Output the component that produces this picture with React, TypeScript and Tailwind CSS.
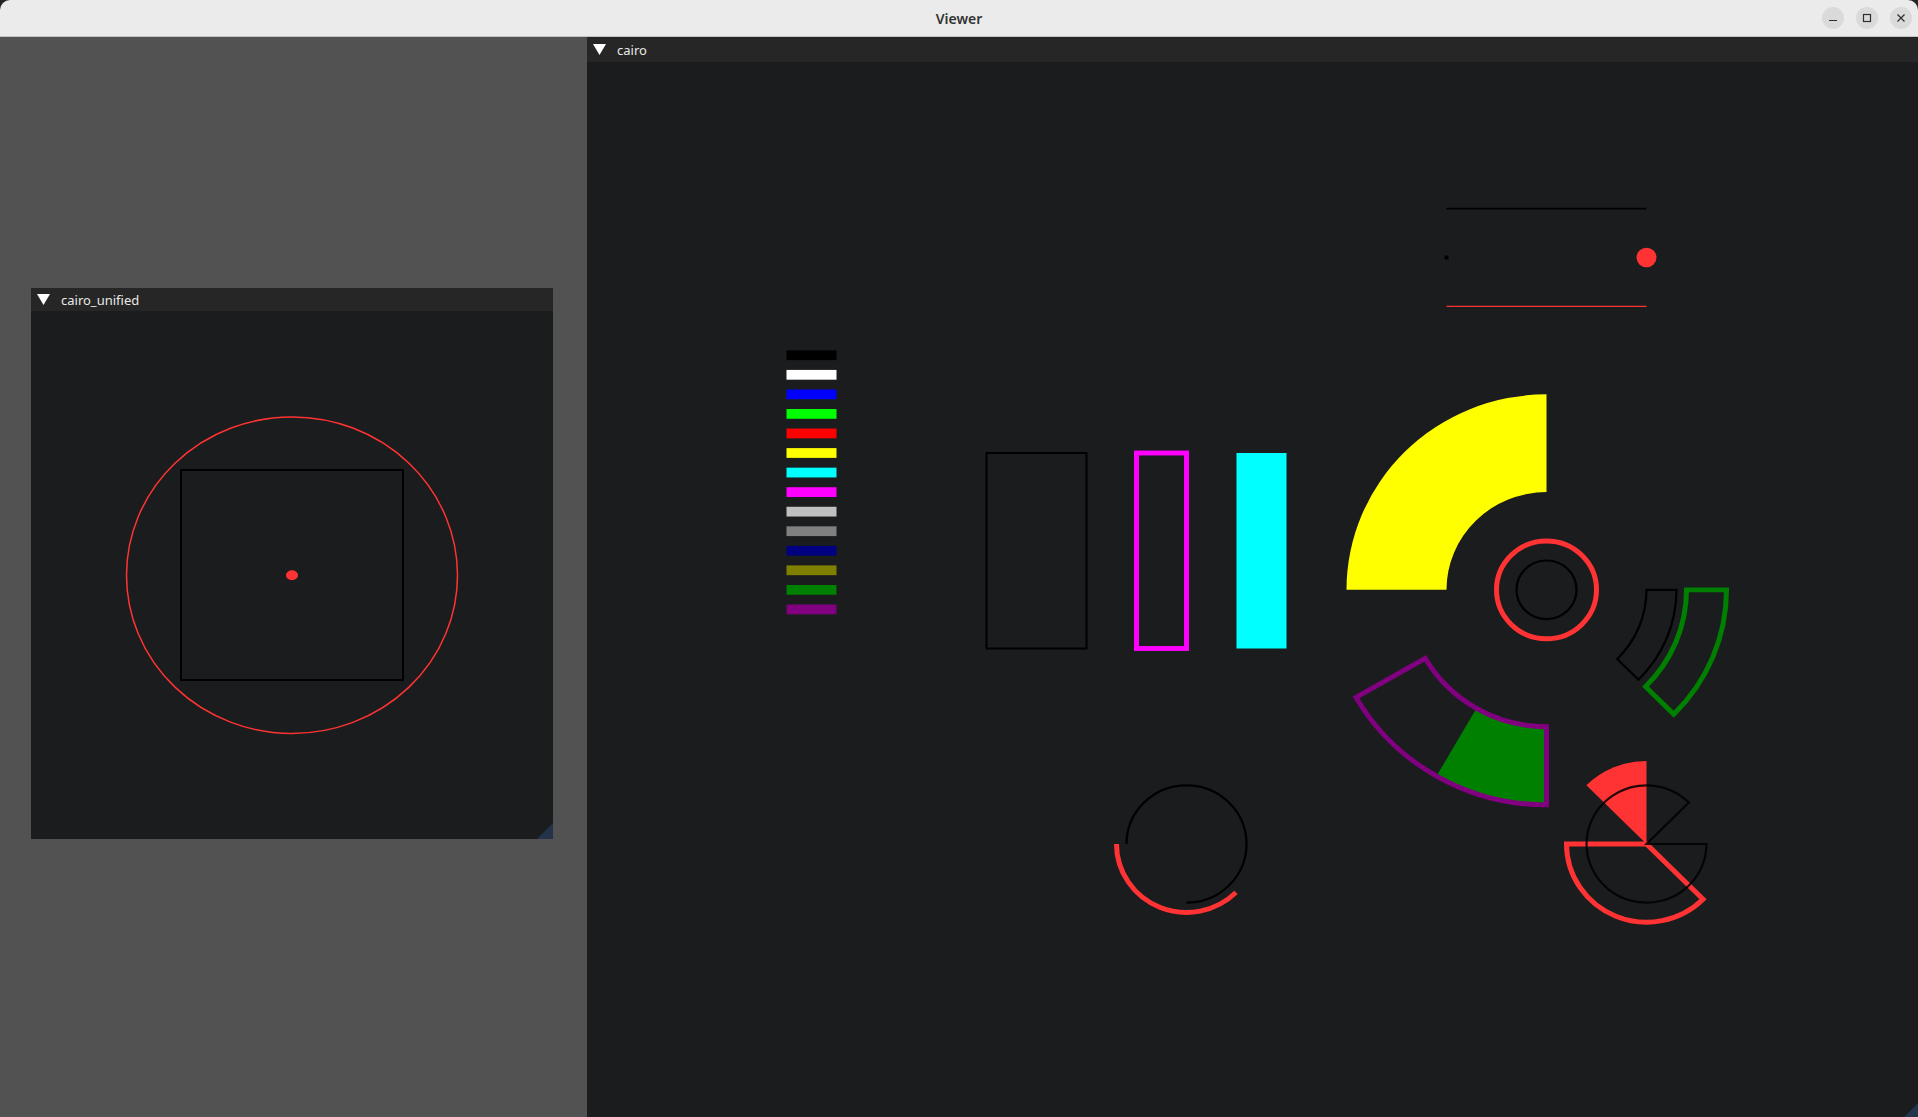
import React from 'react';

// angles in degrees, screen space (y down), clockwise positive
const pt = (cx: number, cy: number, r: number, a: number) => {
  const t = (a * Math.PI) / 180;
  return [cx + r * Math.cos(t), cy + r * Math.sin(t)];
};

const sector = (cx: number, cy: number, r1: number, r2: number, a0: number, a1: number) => {
  const large = a1 - a0 > 180 ? 1 : 0;
  const [ox0, oy0] = pt(cx, cy, r2, a0);
  const [ox1, oy1] = pt(cx, cy, r2, a1);
  if (r1 === 0) {
    return `M${cx} ${cy} L${ox0} ${oy0} A${r2} ${r2} 0 ${large} 1 ${ox1} ${oy1} Z`;
  }
  const [ix1, iy1] = pt(cx, cy, r1, a1);
  const [ix0, iy0] = pt(cx, cy, r1, a0);
  return `M${ox0} ${oy0} A${r2} ${r2} 0 ${large} 1 ${ox1} ${oy1} L${ix1} ${iy1} A${r1} ${r1} 0 ${large} 0 ${ix0} ${iy0} Z`;
};

const arc = (cx: number, cy: number, r: number, a0: number, a1: number) => {
  const large = a1 - a0 > 180 ? 1 : 0;
  const [x0, y0] = pt(cx, cy, r, a0);
  const [x1, y1] = pt(cx, cy, r, a1);
  return `M${x0} ${y0} A${r} ${r} 0 ${large} 1 ${x1} ${y1}`;
};

const swatches = [
  '#000000', '#ffffff', '#0000ff', '#00ff00', '#ff0000', '#ffff00', '#00ffff',
  '#ff00ff', '#c0c0c0', '#808080', '#000080', '#808000', '#008000', '#800080',
];

const RED = '#ff3333';

const Triangle = () => (
  <svg width="13" height="11" viewBox="0 0 13 11" className="shrink-0">
    <polygon points="0,0 13,0 6.5,11" fill="#ffffff" />
  </svg>
);

const PanelHeader: React.FC<{ title: string; h: string }> = ({ title, h }) => (
  <div className={`${h} shrink-0 bg-[#262626] flex items-center pl-[6px] gap-[11px]`}>
    <Triangle />
    <span className="text-[13px] text-[#e8e8e8] leading-none pt-[2px]" style={{ fontFamily: '"Noto Sans", sans-serif' }}>
      {title}
    </span>
  </div>
);

const Grip = ({ w, h, s }: { w: number; h: number; s: number }) => (
  <polygon points={`${w},${h - s} ${w},${h} ${w - s},${h}`} fill="#23344a" />
);

const CairoCanvas = () => (
  <svg className="absolute inset-0 block" width="1331" height="1055">
    <g transform="translate(-0.5 0) scale(1 0.9775)">
      {swatches.map((c, i) => (
        <rect key={c} x={200} y={295 + i * 20} width={50} height={10} fill={c} />
      ))}

      <rect x={400} y={400} width={100} height={200} fill="none" stroke="#000" strokeWidth={2} />
      <rect x={550} y={400} width={50} height={200} fill="none" stroke="#ff00ff" strokeWidth={5} />
      <rect x={650} y={400} width={50} height={200} fill="#00ffff" />

      <line x1={860} y1={150} x2={1060} y2={150} stroke="#000" strokeWidth={2} />
      <rect x={858} y={198} width={4} height={4} fill="#000" />
      <circle cx={1060} cy={200} r={10} fill={RED} />
      <line x1={860} y1={250} x2={1060} y2={250} stroke={RED} strokeWidth={1.2} />

      {/* cluster around (960,540) */}
      <path d={sector(960, 540, 100, 200, 180, 270)} fill="#ffff00" />
      <circle cx={960} cy={540} r={50} fill="none" stroke={RED} strokeWidth={5} />
      <circle cx={960} cy={540} r={30} fill="none" stroke="#000" strokeWidth={2.2} />
      <path d={sector(960, 540, 100, 130, 0, 45)} fill="none" stroke="#000" strokeWidth={2.2} />
      <path d={sector(960, 540, 140, 180, 0, 45)} fill="none" stroke="#008000" strokeWidth={5} />
      <path d={sector(960, 540, 140, 220, 90, 120)} fill="#008000" />
      <path d={sector(960, 540, 140, 220, 90, 150)} fill="none" stroke="#800080" strokeWidth={5} />

      {/* arcs */}
      <path d={arc(600, 800, 60, 180, 450)} fill="none" stroke="#000" strokeWidth={2.2} />
      <path d={arc(600, 800, 70, 45, 180)} fill="none" stroke={RED} strokeWidth={5} />

      {/* pies */}
      <path d={sector(1060, 800, 0, 85, 225, 270)} fill={RED} />
      <path d={sector(1060, 800, 0, 80, 45, 180)} fill="none" stroke={RED} strokeWidth={5} />
      <path d={sector(1060, 800, 0, 60, 0, 315)} fill="none" stroke="#000" strokeOpacity={0.85} strokeWidth={2.2} />
    </g>
    <Grip w={1331} h={1055} s={14} />
  </svg>
);

const UnifiedCanvas = () => (
  <svg className="absolute inset-0 block" width="522" height="528">
    <ellipse cx={261} cy={264.2} rx={165.5} ry={158.3} fill="none" stroke={RED} strokeWidth={1.5} />
    <rect x={150} y={159} width={222} height={210} fill="none" stroke="#000" strokeWidth={2} />
    <ellipse cx={261} cy={264.3} rx={6} ry={5} fill={RED} />
    <Grip w={522} h={528} s={16} />
  </svg>
);

const WinButton: React.FC<{ children: React.ReactNode }> = ({ children }) => (
  <div className="w-[22px] h-[22px] rounded-full bg-[#dadada] flex items-center justify-center">
    <svg width="10" height="10" viewBox="0 0 10 10">{children}</svg>
  </div>
);

export default function App() {
  return (
    <div className="w-[1918px] h-[1117px] bg-[#242424] overflow-hidden">
      <div className="h-full flex flex-col rounded-t-[10px] overflow-hidden">
        <div className="h-[37px] shrink-0 bg-[#ebebeb] border-b border-[#c4c4c4] grid grid-cols-[1fr_auto_1fr] items-center">
          <div />
          <span className="text-[14px] font-semibold text-[#333333]" style={{ fontFamily: '"Noto Sans", sans-serif' }}>
            Viewer
          </span>
          <div className="flex justify-end gap-[12px] pr-[6px]">
            <WinButton>
              <line x1="1" y1="7.5" x2="9" y2="7.5" stroke="#2e2e2e" strokeWidth="1.2" />
            </WinButton>
            <WinButton>
              <rect x="1.5" y="1.5" width="7" height="7" fill="none" stroke="#2e2e2e" strokeWidth="1.2" />
            </WinButton>
            <WinButton>
              <path d="M1.5 1.5 L8.5 8.5 M8.5 1.5 L1.5 8.5" stroke="#2e2e2e" strokeWidth="1.2" />
            </WinButton>
          </div>
        </div>

        <div className="relative flex-1 bg-[#525252]">
          {/* cairo window */}
          <div className="absolute left-[587px] top-0 right-0 bottom-0 flex flex-col bg-[#1b1c1e]">
            <PanelHeader title="cairo" h="h-[25px]" />
            <div className="relative flex-1 overflow-hidden">
              <CairoCanvas />
            </div>
          </div>

          {/* cairo_unified window */}
          <div className="absolute left-[31px] top-[251px] w-[522px] h-[551px] flex flex-col bg-[#1b1c1e]">
            <PanelHeader title="cairo_unified" h="h-[23px]" />
            <div className="relative flex-1 overflow-hidden">
              <UnifiedCanvas />
            </div>
          </div>
        </div>
      </div>
    </div>
  );
}
